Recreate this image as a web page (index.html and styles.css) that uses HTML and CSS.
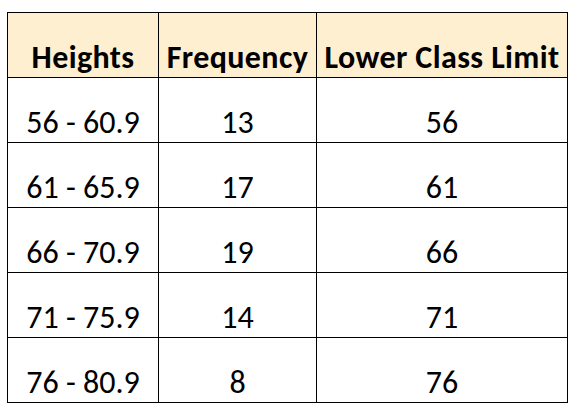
FILE: index.html
```html
<!DOCTYPE html>
<html>
<head>
<meta charset="utf-8">
<link rel="stylesheet" href="styles.css">
</head>
<body>
<table class="freq">
  <colgroup>
    <col class="c1"><col class="c2"><col class="c3">
  </colgroup>
  <thead>
    <tr><th>Heights</th><th>Frequency</th><th>Lower Class Limit</th></tr>
  </thead>
  <tbody>
    <tr><td>56 - 60.9</td><td>13</td><td>56</td></tr>
    <tr><td>61 - 65.9</td><td>17</td><td>61</td></tr>
    <tr><td>66 - 70.9</td><td>19</td><td>66</td></tr>
    <tr><td>71 - 75.9</td><td>14</td><td>71</td></tr>
    <tr><td>76 - 80.9</td><td>8</td><td>76</td></tr>
  </tbody>
</table>
</body>
</html>
```
FILE: styles.css
```css
html, body {
  margin: 0;
  padding: 0;
  background: #ffffff;
}
body {
  padding: 12px 0 0 7px;
  font-family: Carlito, Calibri, Lato, "Liberation Sans", sans-serif;
  color: #000;
}
.freq {
  border-collapse: collapse;
  table-layout: fixed;
  width: 560px;
}
.c1 { width: 151px; }
.c2 { width: 158px; }
.c3 { width: 251px; }
.freq th, .freq td {
  border: 1px solid #000;
  height: 65px;
  padding: 0 0 3px 0;
  box-sizing: border-box;
  text-align: center;
  vertical-align: bottom;
  line-height: 1;
  white-space: nowrap;
}
.freq th {
  background: #feefd1;
  font-weight: bold;
  font-size: 32px;
  letter-spacing: 0.4px;
  padding-bottom: 3px;
}
.freq td {
  font-size: 32px;
  font-weight: normal;
}
```
